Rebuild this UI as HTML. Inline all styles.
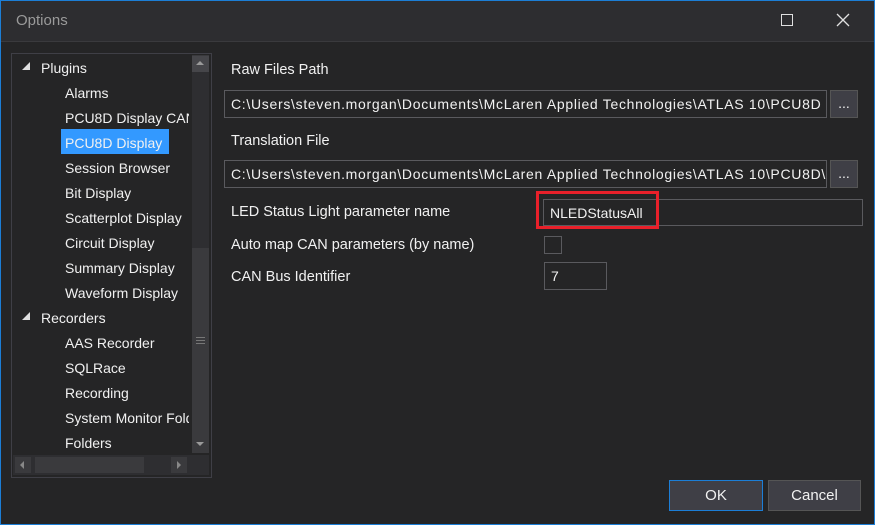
<!DOCTYPE html>
<html><head><style>
*{margin:0;padding:0;box-sizing:border-box}
body{width:875px;height:525px;background:#252526;font-family:"Liberation Sans",sans-serif;font-size:14px;color:#f1f1f1;position:relative;overflow:hidden}
.win{position:absolute;left:0;top:0;width:875px;height:525px;border:1px solid #1c7ed6}
.title{position:absolute;left:1px;top:1px;width:873px;height:41px;background:#2d2d30;border-bottom:1px solid #3a3a3d}
.a{position:absolute;white-space:nowrap}
.tb{position:absolute;border:1px solid #5a5a5e;background:#252526;height:28px;padding-left:6px;line-height:27px;overflow:hidden;white-space:nowrap}
.btn{position:absolute;background:#3f3f46;border:1px solid #555;text-align:center}
.tree .a{line-height:26px}
.lbl{font-size:14.5px;line-height:17px}
</style></head><body>
<div class="win"></div>
<div class="title"></div>
<div class="a" style="left:16px;top:12px;font-size:15px;color:#9a9a9a">Options</div>
<div class="a" style="left:781px;top:14px;width:12px;height:12px;border:1.5px solid #e0e0e0"></div>
<svg class="a" style="left:836px;top:13px" width="14" height="14"><path d="M1 1L13 13M13 1L1 13" stroke="#e0e0e0" stroke-width="1.3"/></svg>

<div class="a" style="left:11px;top:53px;width:201px;height:425px;border:1px solid #3f3f46;background:#252526"></div>
<div class="a" style="left:192px;top:55px;width:17px;height:398px;background:#3a3a3d"></div>
<div class="a" style="left:192px;top:56px;width:17px;height:16px;background:#46464a"></div>
<div class="a" style="left:192px;top:72px;width:17px;height:176px;background:#2e2e31"></div>
<div class="a" style="left:196px;top:61px;width:0;height:0;border-left:4px solid transparent;border-right:4px solid transparent;border-bottom:4px solid #9a9a9a"></div>
<div class="a" style="left:196px;top:442px;width:0;height:0;border-left:4px solid transparent;border-right:4px solid transparent;border-top:4px solid #9a9a9a"></div>
<div class="a" style="left:196px;top:337px;width:9px;height:7px;border-top:1px solid #777;border-bottom:1px solid #777"></div>
<div class="a" style="left:196px;top:340px;width:9px;height:1px;background:#777"></div>
<div class="a" style="left:13px;top:455px;width:196px;height:20px;background:#2e2e31"></div>
<div class="a" style="left:35px;top:457px;width:109px;height:16px;background:#3a3a3d"></div>
<div class="a" style="left:15px;top:457px;width:16px;height:16px;background:#3a3a3d"></div>
<div class="a" style="left:171px;top:457px;width:16px;height:16px;background:#3a3a3d"></div>
<div class="a" style="left:20px;top:461px;border-top:4px solid transparent;border-bottom:4px solid transparent;border-right:4px solid #888"></div>
<div class="a" style="left:177px;top:461px;border-top:4px solid transparent;border-bottom:4px solid transparent;border-left:4px solid #888"></div>

<div class="a" style="left:61px;top:129px;width:108px;height:25px;background:#3399ff"></div>
<div class="tree">
<svg class="a" style="left:22px;top:62px" width="8" height="8"><path d="M8 0L8 8L0 8Z" fill="#e0e0e0"/></svg>
<svg class="a" style="left:22px;top:312px" width="8" height="8"><path d="M8 0L8 8L0 8Z" fill="#e0e0e0"/></svg>
<div class="a" style="left:41px;top:55px">Plugins</div>
<div class="a" style="left:65px;top:80px">Alarms</div>
<div class="a" style="left:65px;top:105px;width:124px;overflow:hidden">PCU8D Display CAN</div>
<div class="a" style="left:65px;top:130px">PCU8D Display</div>
<div class="a" style="left:65px;top:155px">Session Browser</div>
<div class="a" style="left:65px;top:180px">Bit Display</div>
<div class="a" style="left:65px;top:205px;width:124px;overflow:hidden">Scatterplot Display</div>
<div class="a" style="left:65px;top:230px">Circuit Display</div>
<div class="a" style="left:65px;top:255px">Summary Display</div>
<div class="a" style="left:65px;top:280px">Waveform Display</div>
<div class="a" style="left:41px;top:305px">Recorders</div>
<div class="a" style="left:65px;top:330px">AAS Recorder</div>
<div class="a" style="left:65px;top:355px">SQLRace</div>
<div class="a" style="left:65px;top:380px">Recording</div>
<div class="a" style="left:65px;top:405px;width:124px;overflow:hidden">System Monitor Folders</div>
<div class="a" style="left:65px;top:430px">Folders</div>
</div>

<div class="a lbl" style="left:231px;top:62px">Raw Files Path</div>
<div class="tb" style="left:224px;top:90px;width:603px;letter-spacing:0.7px">C:\Users\steven.morgan\Documents\McLaren Applied Technologies\ATLAS 10\PCU8D</div>
<div class="btn" style="left:830px;top:90px;width:28px;height:28px;line-height:24px">...</div>
<div class="a lbl" style="left:231px;top:133px">Translation File</div>
<div class="tb" style="left:224px;top:160px;width:603px;letter-spacing:0.7px">C:\Users\steven.morgan\Documents\McLaren Applied Technologies\ATLAS 10\PCU8D\Translation</div>
<div class="btn" style="left:830px;top:160px;width:28px;height:28px;line-height:24px">...</div>
<div class="a lbl" style="left:231px;top:204px">LED Status Light parameter name</div>
<div class="tb" style="left:543px;top:199px;width:320px;height:27px;line-height:26px">NLEDStatusAll</div>
<div class="a" style="left:536px;top:191px;width:123px;height:38px;border:3.5px solid #e8202a"></div>
<div class="a lbl" style="left:231px;top:237px">Auto map CAN parameters (by name)</div>
<div class="a" style="left:544px;top:236px;width:18px;height:18px;border:1px solid #5a5a5e"></div>
<div class="a lbl" style="left:231px;top:269px">CAN Bus Identifier</div>
<div class="tb" style="left:544px;top:262px;width:63px">7</div>

<div class="btn" style="left:669px;top:480px;width:94px;height:31px;line-height:30px;border-color:#1c7ed6;font-size:15px">OK</div>
<div class="btn" style="left:768px;top:480px;width:93px;height:31px;line-height:30px;font-size:15px">Cancel</div>
</body></html>
